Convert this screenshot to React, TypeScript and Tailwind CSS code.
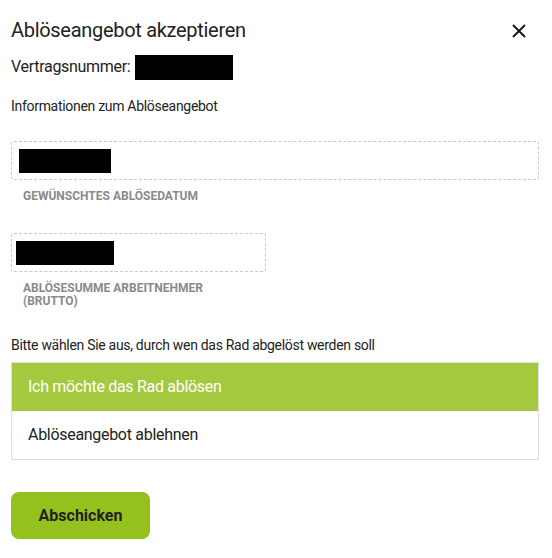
export default function App() {
  return (
    <div
      className="min-h-[558px] bg-white text-[#222] px-[11px] pt-[16px] tracking-[-0.3px]"
      style={{ fontFamily: 'Roboto, "Liberation Sans", sans-serif' }}
    >
      {/* Header */}
      <div className="flex items-center justify-between w-[528px]">
        <h1 className="text-[20px] leading-[28px] font-normal">Ablöseangebot akzeptieren</h1>
        <button className="mr-[13px] mt-[2px] text-[#111]" aria-label="Close">
          <svg width="14" height="14" viewBox="0 0 14 14" fill="none" stroke="currentColor" strokeWidth="1.8">
            <path d="M1 1 13 13M13 1 1 13" />
          </svg>
        </button>
      </div>

      <div className="mt-[10px] flex items-center gap-[5px] text-[16px] leading-[26px]">
        <span>Vertragsnummer:</span>
        <span className="inline-block w-[98px] h-[25px] bg-black" />
      </div>

      <p className="mt-[16px] text-[14px] leading-[20px]">Informationen zum Ablöseangebot</p>

      {/* Field 1 */}
      <div className="mt-[25px] w-[528px] h-[39px] border border-dashed border-[#c8c8c8] rounded-[3px] px-[7px] pt-[7px]">
        <div className="w-[92px] h-[24px] bg-black" />
      </div>
      <div className="mt-[10px] ml-[12px] text-[12px] leading-[13px] font-bold uppercase text-[#8a8a8a] tracking-normal">
        Gewünschtes Ablösedatum
      </div>

      {/* Field 2 */}
      <div className="mt-[30px] w-[255px] h-[39px] border border-dashed border-[#c8c8c8] rounded-[3px] px-[4px] pt-[7px]">
        <div className="w-[98px] h-[24px] bg-black" />
      </div>
      <div className="mt-[10px] ml-[12px] w-[200px] text-[12px] leading-[13px] font-bold uppercase text-[#8a8a8a] tracking-normal">
        Ablösesumme Arbeitnehmer (Brutto)
      </div>

      <p className="mt-[27px] text-[14px] leading-[20px]">
        Bitte wählen Sie aus, durch wen das Rad abgelöst werden soll
      </p>

      {/* Options */}
      <div className="mt-[7px] w-[528px] border border-[#dedede]">
        <div className="h-[48px] bg-[#a5c93e] text-white text-[16px] flex items-center px-[16px]">
          Ich möchte das Rad ablösen
        </div>
        <div className="h-[48px] bg-white text-[#222] text-[16px] flex items-center px-[16px]">
          Ablöseangebot ablehnen
        </div>
      </div>

      <button className="mt-[32px] w-[139px] h-[47px] rounded-[8px] bg-[#95c11f] text-[#222] text-[16px] font-bold tracking-normal">
        Abschicken
      </button>
    </div>
  );
}
